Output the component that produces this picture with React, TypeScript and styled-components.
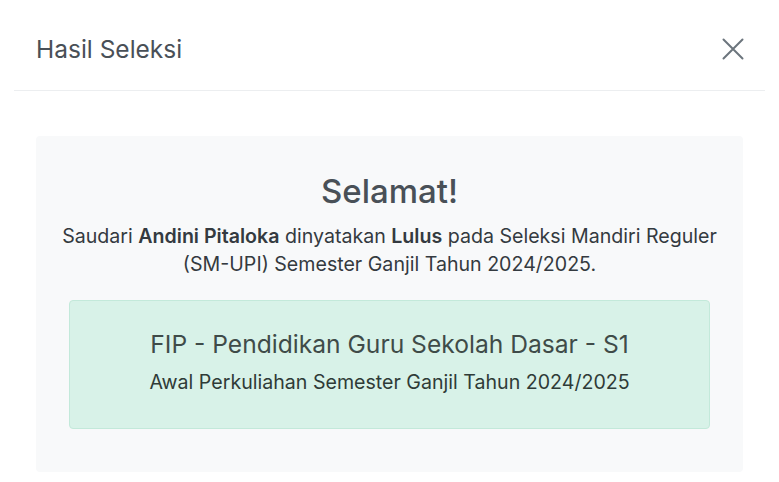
import React from 'react';
import styled, { createGlobalStyle } from 'styled-components';

const GlobalStyle = createGlobalStyle`
  body {
    margin: 0;
    background: #fff;
    font-family: Inter, "Noto Sans", sans-serif;
    color: #495057;
  }
`;

const Modal = styled.div`
  width: 779px;
  height: 482px;
  padding: 0 14px;
  box-sizing: border-box;
  background: #fff;
  overflow: hidden;
`;

const Header = styled.div`
  display: flex;
  align-items: center;
  justify-content: space-between;
  height: 91px;
  box-sizing: border-box;
  padding: 8px 22px 0;
  border-bottom: 1px solid #eceef0;
`;

const Title = styled.h5`
  margin: 0;
  font-size: 24.5px;
  font-weight: 400;
  color: #495057;
`;

const CloseButton = styled.button`
  display: flex;
  align-items: center;
  justify-content: center;
  padding: 0;
  border: none;
  background: transparent;
  cursor: pointer;
  margin-right: -2px;
`;

const Body = styled.div`
  padding: 45px 22px 0;
`;

const ResultCard = styled.div`
  background: #f8f9fa;
  border-radius: 4px;
  padding: 35px 10px 43px;
  text-align: center;
`;

const Heading = styled.h2`
  margin: 0 0 11px;
  font-size: 33px;
  font-weight: 500;
  line-height: 40px;
  color: #495057;
`;

const Message = styled.p`
  margin: 0 0 22px;
  font-size: 19.6px;
  line-height: 28px;
  color: #343a40;

  b {
    font-weight: 600;
  }
`;

const ProgramBox = styled.div`
  margin: 0 23px;
  background: #d8f2e8;
  border: 1px solid #c3e9da;
  border-radius: 4px;
  padding: 27px 20px 33px;
`;

const ProgramName = styled.div`
  font-size: 24.6px;
  line-height: 32px;
  color: #3f4b48;
  margin-bottom: 9px;
`;

const ProgramNote = styled.div`
  font-size: 19.6px;
  line-height: 26px;
  color: #2f3b37;
`;

const CloseIcon = () => (
  <svg width="24" height="24" viewBox="0 0 24 24" fill="none" stroke="#6c757d" strokeWidth="2" strokeLinecap="round">
    <path d="M2.5 2.5L21.5 21.5M21.5 2.5L2.5 21.5" />
  </svg>
);

export default function App() {
  return (
    <>
      <GlobalStyle />
      <Modal>
        <Header>
          <Title>Hasil Seleksi</Title>
          <CloseButton aria-label="Tutup">
            <CloseIcon />
          </CloseButton>
        </Header>
        <Body>
          <ResultCard>
            <Heading>Selamat!</Heading>
            <Message>
              Saudari <b>Andini Pitaloka</b> dinyatakan <b>Lulus</b> pada Seleksi Mandiri Reguler
              <br />
              (SM-UPI) Semester Ganjil Tahun 2024/2025.
            </Message>
            <ProgramBox>
              <ProgramName>FIP - Pendidikan Guru Sekolah Dasar - S1</ProgramName>
              <ProgramNote>Awal Perkuliahan Semester Ganjil Tahun 2024/2025</ProgramNote>
            </ProgramBox>
          </ResultCard>
        </Body>
      </Modal>
    </>
  );
}
